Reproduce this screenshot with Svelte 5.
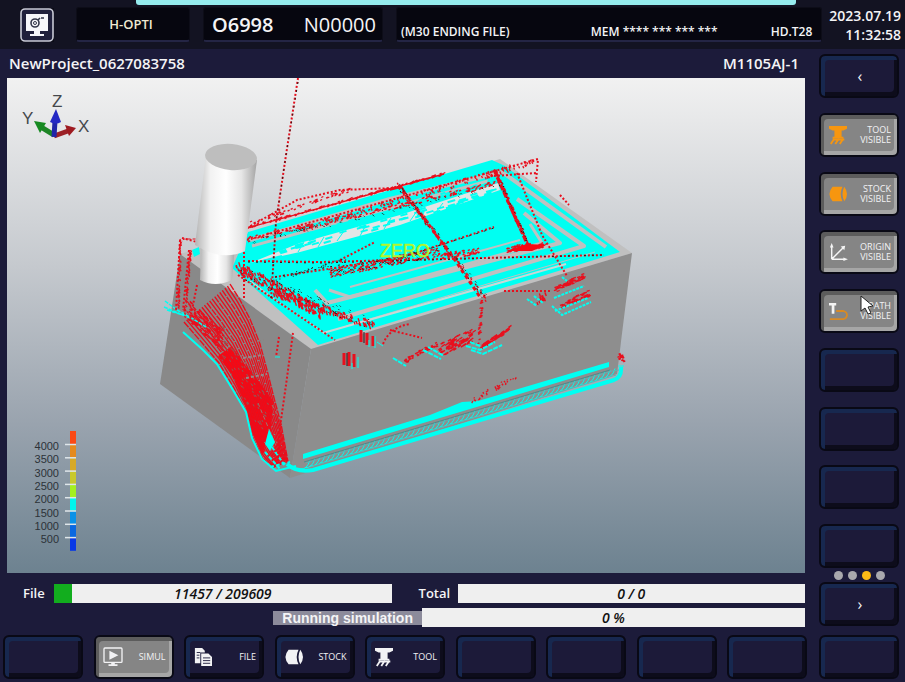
<script>
	// Soft keys down the right side
	const sideKeys = [
		{ label: '‹', kind: 'arrow', name: 'Previous' },
		{ label: 'TOOL VISIBLE', icon: 'tool', on: true },
		{ label: 'STOCK VISIBLE', icon: 'stock', on: true },
		{ label: 'ORIGIN VISIBLE', icon: 'origin', on: true },
		{ label: 'PATH VISIBLE', icon: 'path', on: true, pointer: true },
		{}, {}, {}, {}
	];

	// Soft keys along the bottom
	const bottomKeys = [
		{},
		{ label: 'SIMUL', icon: 'simul', on: true },
		{ label: 'FILE', icon: 'file' },
		{ label: 'STOCK', icon: 'stock' },
		{ label: 'TOOL', icon: 'tool' },
		{}, {}, {}, {}
	];

	const pages = [0, 1, 2, 3];
	const activePage = 2;

	const done = 11457;
	const lines = 209609;

	// Feed rate legend, top to bottom
	const feeds = [4000, 3500, 3000, 2500, 2000, 1500, 1000, 500];
	const feedColors = ['#fb4a16', '#e58a1e', '#d6a928', '#c8c92c', '#a4f020', '#00f6ee', '#0a92e8', '#0a68e0', '#0838e6'];

	// Small repeatable random generator so the path looks the same on each load
	let seed = 7;
	function rnd() {
		seed = (seed * 16807) % 2147483647;
		return seed / 2147483647;
	}

	// Short dashes spread round a line
	function scatter(x1, y1, x2, y2, spread, count, dx = 2, dy = -1) {
		let d = '';
		for (let i = 0; i < count; i++) {
			const t = rnd();
			const x = x1 + (x2 - x1) * t + (rnd() - 0.5) * 2;
			const y = y1 + (y2 - y1) * t + (rnd() - 0.5) * spread;
			d += `M${x.toFixed(1)} ${y.toFixed(1)}l${dx} ${dy}`;
		}
		return d;
	}

	// Curves between two border polylines with the same number of points
	function blend(a, b, t) {
		return 'M' + a.map((p, i) => `${(p[0] + (b[i][0] - p[0]) * t).toFixed(1)} ${(p[1] + (b[i][1] - p[1]) * t).toFixed(1)}`).join('L');
	}

	const fanLeft = [[184, 322], [203, 344], [219, 363], [234, 388], [246, 411], [253, 438], [262, 457], [273, 468]];
	const fanRight = [[230, 284], [240, 300], [250, 319], [260, 344], [268, 374], [274, 398], [281, 424], [288, 462]];
	const fan = Array.from({ length: 19 }, (_, i) => blend(fanLeft, fanRight, i / 18));

	// Small arcs between the two cyan rails at the foot of the block
	let teeth = '';
	for (let i = 0; i < 62; i++) {
		const x = 306 + i * 5;
		const y = 469 - i * 1.5;
		teeth += `M${x - 6} ${y}q7 1 10 -9`;
	}

	const redClouds = [
		scatter(247, 240, 500, 183, 5, 190),
		scatter(247, 228, 444, 174, 2, 150),
		scatter(300, 228, 535, 160, 6, 150, 1, 2),
		scatter(250, 223, 350, 190, 4, 55),
		scatter(236, 265, 322, 312, 12, 220, 1, 3),
		scatter(270, 290, 375, 325, 7, 130, 1, 3),
		scatter(328, 274, 440, 252, 9, 170),
		scatter(440, 257, 478, 252, 6, 60),
		scatter(505, 250, 545, 245, 6, 80),
		scatter(403, 362, 438, 343, 5, 50, 2, -1),
		scatter(439, 351, 472, 336, 13, 95, 3, -2),
		scatter(480, 348, 509, 329, 4, 60, 3, -2),
		scatter(553, 290, 582, 277, 6, 60, 3, -1),
		scatter(561, 306, 587, 294, 6, 60, 3, -1),
		scatter(537, 299, 545, 295, 8, 16, 1, 3),
		scatter(470, 402, 517, 377, 5, 45, 1, -1),
		scatter(398, 185, 485, 298, 6, 100, 1, 2),
		scatter(494, 168, 529, 247, 6, 130, 1, 2),
		scatter(481, 300, 478, 346, 3, 35, 2, -1),
		scatter(180, 240, 178, 308, 3, 40, 1, 2),
		scatter(190, 250, 184, 315, 4, 60, 1, 2),
		scatter(618, 356, 623, 360, 6, 20)
	];
	const darkClouds = [
		scatter(240, 272, 375, 325, 12, 95, 1, 1),
		scatter(330, 273, 440, 250, 10, 90, 1, 1),
		scatter(275, 279, 345, 260, 4, 40, 1, 0),
		scatter(247, 242, 500, 186, 4, 60, 1, 1),
		scatter(398, 185, 485, 298, 8, 55, 1, 1),
		scatter(495, 170, 529, 247, 5, 25, 1, 1)
	];
	const cyanNoise = [
		scatter(285, 243, 490, 182, 6, 90, 5, -2),
		scatter(275, 253, 490, 194, 8, 60, 7, -2)
	];
	const redTexture = scatter(186, 308, 222, 340, 20, 190, 2, 2);
	const fanGaps = scatter(222, 340, 268, 420, 44, 90, 1, 2);
</script>

{#snippet icon(name)}
	<svg class="icon" viewBox="0 0 20 20" aria-hidden="true">
		{#if name === 'tool'}
			<path d="M0 0h20v3l-4 2h-2v7h2v2H4v-2h2V5H4L0 3z" />
			<path d="M2 20l4-6M7 20l4-6M12 20l4-6M4 15h13" fill="none" stroke="currentColor" stroke-width="2" />
		{:else if name === 'stock'}
			<path d="M4 2h11q-4 8 0 16H4q-7-8 0-16z" />
			<path d="M17 2q6 8 0 16q-4-8 0-16z" />
		{:else if name === 'origin'}
			<path d="M3 18V4M3 18h14M3 18L16 5" fill="none" stroke="currentColor" stroke-width="1.6" />
			<path d="M3 0l2 5H1zM21 18l-5 2v-4zM18 3l-1 5-4-4z" />
		{:else if name === 'path'}
			<path class="pin" d="M0 1h8v3H6v9H3V4H0z" />
			<path class="track" d="M1 19h15q4-1 4-4.500t-4-4.500H8" fill="none" stroke-width="2" />
		{:else if name === 'simul'}
			<rect x="0" y="0" width="20" height="16" rx="1" fill="none" stroke="currentColor" stroke-width="1.500" />
			<path d="M6 3l10 5-10 5zM8 16h4v2h3v2H5v-2h3z" />
		{:else if name === 'file'}
			<path d="M1 0h8l3 3v2H7v12H1z" />
			<path d="M8 6h8l4 4v10H8z" />
			<path class="rule" d="M3 5h4M3 8h3M3 11h3M10 11h8M10 14h8M10 17h8" fill="none" />
		{/if}
	</svg>
{/snippet}

{#snippet softKey(key)}
	<button class="key" class:on={key.on} aria-label={key.name ?? key.label ?? 'Unassigned'}>
		{#if key.kind === 'arrow'}
			<span class="arrow">{key.label}</span>
		{:else if key.icon}
			{@render icon(key.icon)}
			<span class="key-label">{key.label}</span>
		{/if}
		{#if key.pointer}
			<svg class="pointer" viewBox="0 0 14 20" aria-hidden="true">
				<path d="M1 1v15l4-3 3 6 3-1-3-6 5-1z" />
			</svg>
		{/if}
	</button>
{/snippet}

<div class="screen">
	<header>
		<div class="banner"></div>
		<button class="logo" aria-label="Monitor">
			<svg viewBox="0 0 34 34">
				<rect x="1" y="1" width="32" height="32" rx="4" fill="#20203c" stroke="#c9cad6" stroke-width="1.6" />
				<path d="M6 6h22v17H6zM14 23h6v3h4v2H10v-2h4z" fill="#f6f6fa" />
				<circle cx="15" cy="15" r="4" fill="none" stroke="#33364a" stroke-width="1.6" />
				<circle cx="15" cy="15" r="1.5" fill="none" stroke="#33364a" />
				<path d="M18 12l2-2M21 10h3" fill="none" stroke="#33364a" stroke-width="1.6" />
			</svg>
		</button>
		<div class="display mode">H-OPTI</div>
		<div class="display program">
			<span class="strong">O6998</span>
			<span>N00000</span>
		</div>
		<div class="display status">
			<span>(M30 ENDING FILE)</span>
			<span class="mem">MEM **** *** *** ***</span>
			<span>HD.T28</span>
		</div>
		<div class="clock">
			<time>2023.07.19</time>
			<time>11:32:58</time>
		</div>
	</header>

	<main>
		<section class="work">
			<div class="titles">
				<span>NewProject_0627083758</span>
				<span>M1105AJ-1</span>
			</div>

			<svg class="scene" viewBox="7 78 798 495" role="img" aria-label="Machining simulation">
				<defs>
					<linearGradient id="sky" x1="0" y1="0" x2="0" y2="1">
						<stop offset="0" stop-color="#f1f1f1" />
						<stop offset="0.38" stop-color="#c5c9ce" />
						<stop offset="0.7" stop-color="#99a3ae" />
						<stop offset="1" stop-color="#6d8290" />
					</linearGradient>
					<linearGradient id="steel" x1="0" y1="0" x2="1" y2="0">
						<stop offset="0" stop-color="#b4b4b4" />
						<stop offset="0.25" stop-color="#f2f2f2" />
						<stop offset="0.5" stop-color="#ffffff" />
						<stop offset="0.75" stop-color="#e6e6e6" />
						<stop offset="1" stop-color="#a4a4a4" />
					</linearGradient>
				</defs>
				<rect x="7" y="78" width="798" height="495" fill="url(#sky)" />

				<!-- stock -->
				<path d="M180 254L500 159L632 253L311 349z" fill="#c0c0c0" />
				<path d="M180 254L311 349L290 478L160 384z" fill="#898989" />
				<path d="M311 349L632 253L617 374L290 478z" fill="#8e8e8e" />

				<!-- pocket passes -->
				<g class="cyan">
					<path class="fill" d="M232 268L248 232L492 160L505 166L620 252L318 345z" />
				</g>
				<g fill="none" stroke="#c0c0c0" stroke-width="4" stroke-linejoin="round">
					<path d="M250 240L390 199L502 172L606 247" />
					<path d="M252 246L488 181" stroke-width="3" />
					<path d="M517 199L584 246L338 319" />
					<path d="M524 213L560 243L327 303L315 290" />
					<path d="M530 224L542 243L350 297L329 290" stroke-width="3" />
					<path d="M350 287L520 240" stroke-width="2" />
					<path d="M595 252L346 326" stroke-width="1" />
					<path d="M250 281L323 333L566 264" stroke="#c9d8d6" stroke-width="2" />
				</g>
				<path d="M250 263L300 243L400 215L498 183L500 190L400 225L300 252z" fill="#e2e6e6" />
				<g class="cyan">
					{#each cyanNoise as d}
						<path {d} stroke-width="2" />
					{/each}
					<path d="M250 264L282 256M245 275L325 336" stroke-width="2" />
					<path d="M298 252L304 242M318 247L324 237M337 241L344 231M360 236L366 225M384 229L391 218M410 221L417 211M436 212L443 203" stroke-width="1" />
				</g>

				<!-- foot of the block -->
				<g class="cyan">
					<path d={teeth} stroke-width="1" />
					<path d="M306 463L612 371L619 370M313 466L616 375" stroke="#5fb2b2" stroke-width="1" />
					<path d="M287 464Q297 473 313 470L614 380Q622 377 621 367" stroke-width="4" />
					<path class="fill" d="M303 454L430 415L462 402L478 401L609 362V367L470 409L303 459z" />
				</g>
				<path d="M304 462L610 370" stroke="#4d8a8c" />

				<!-- side fan -->
				<g class="red">
					<path class="fill" d="M218 356L232 346L246 366L255 376L273 401L271 430L262 455L252 432L245 404L231 374z" />
					{#each fan as d, i}
						<path {d} stroke-width="1.4" stroke-dasharray={i % 3 === 0 ? '7 1' : 'none'} />
					{/each}
					<path d={redTexture} stroke-width="1.2" />
					<path d="M250 343L264 340M258 403L276 446M272 405L281 421M264 442L286 464" stroke="#9a7770" stroke-dasharray="4 3" />
				</g>
				<path d={fanGaps} stroke="#8f5a58" />
				<path d="M243 358L263 355M246 378L267 374" stroke="#958a8a" stroke-width="2" stroke-dasharray="3 2" />
				<g class="cyan">
					<path d="M183 332L203 350L217 364L233 390L246 412L252 438L262 459L276 471L296 466" stroke-width="2" />
					<path d="M165 301L177 310L190 317L206 327M164 307L190 318M167 310L186 316" stroke-width="1.5" stroke-dasharray="4 1" />
					<path class="fill" d="M269 429L275 442L270 451L265 444z" />
					<path d="M265 452L280 469M272 447L285 466M270 467L290 462" stroke-width="2" stroke-dasharray="4 2" />
				</g>

				<!-- approach moves -->
				<g class="red">
					<path class="dots" d="M298 78L286 155L276 222L271 300" />
					<path class="dots" d="M293 333L286 385L280 427L278 461M279 337L276 357M244 228V300" />
					<path class="dots" d="M182 238L197 242M180 240L176 310M189 250L183 310M197 285L190 320" />
					<path class="dots" d="M247 228L297 200L340 190L395 188M247 240L538 159L536 182M494 176L536 173" />
					<path class="dots" d="M517 173L542 235L567 276M504 291L552 291M560 195L569 205" />
					<path class="dots" d="M248 261L320 262L604 255M275 277L400 258L494 227M340 260L375 242" />
					<path class="dots" d="M238 275L335 340M383 344Q390 327 410 324M390 330L422 338" />
					<path d="M247 228L444 174M390 190L402 187L410 200" stroke-width="1.3" />
					{#each redClouds as d}
						<path {d} stroke-width="1.3" />
					{/each}
					<path class="fill" d="M506 251L527 244L546 245L532 251z" />
					<path d="M344 353V365M349 352V366M354 354V367M361 330V342M367 333V345M373 336V346" stroke-width="3" />
					<path d="M398 186L412 202L455 260L480 297" stroke-width="3" stroke-dasharray="4 3" />
					<path d="M494 170L510 206L528 246" stroke-width="3" stroke-dasharray="6 2" />
					<path d="M180 254V244L184 239H197" stroke-dasharray="3 2" />
				</g>
				<g fill="none" stroke="#2b1a1a">
					{#each darkClouds as d}
						<path {d} />
					{/each}
					<path d="M248 262L320 263L604 255M400 258L494 228M275 277L345 264M298 82L286 155L276 222L271 300" stroke-dasharray="2 6" />
					<path d="M347 353V366M364 332V343" />
				</g>
				<g class="cyan">
					<path d="M358 357V368M352 363V369M375 336V348M369 340V347" />
					<path d="M393 358L406 366M423 350L441 359M428 347L444 356M471 350L483 354L502 345M466 346L480 350L495 342M470 342L480 346" stroke-width="2" stroke-dasharray="5 1" />
					<path d="M527 299L537 306M534 296L543 303M554 298L584 286M552 306L562 315L591 302M555 311L588 298M562 277L567 281" stroke-width="2" stroke-dasharray="3 1" />
					<path d="M618 366H624M377 342L383 346M275 357H280" />
				</g>
				<text class="zero" x="380" y="257">ZERO</text>

				<!-- cutter -->
				<path d="M192 250L199 247L200 254L194 257z" fill="#00fff2" />
				<path d="M201 246H235L232 280Q215 288 200 280z" fill="url(#steel)" />
				<path d="M206 156L257 160L245 251Q222 262 195 245z" fill="url(#steel)" />
				<ellipse cx="231" cy="157" rx="26" ry="13" transform="rotate(5 231 157)" fill="#bebebe" />

				<!-- axis triad -->
				<g stroke-width="5">
					<path d="M54 135L41 127" stroke="#1d8526" />
					<path d="M54 136L68 131" stroke="#9c2127" />
					<path d="M54 137L55 121" stroke="#2025a8" />
				</g>
				<path d="M34 121L46 123L40 133z" fill="#178a22" />
				<path d="M76 128L65 125L69 136z" fill="#9e1a20" />
				<path d="M56 109L50 122Q56 125 61 122z" fill="#2428c4" />
				<g class="axis">
					<text x="52" y="107">Z</text>
					<text x="22" y="124">Y</text>
					<text x="78" y="132">X</text>
				</g>

				<!-- feed legend -->
				{#each feedColors as color, i}
					<rect x="70" y={431 + i * 13.3} width="6" height="13.4" fill={color} />
				{/each}
				{#each feeds as feed, i}
					<path d="M65 {444.5 + i * 13.3}H76" stroke="#dfe6ea" stroke-width="1.5" />
					<text class="feed" x="59" y={450 + i * 13.3}>{feed}</text>
				{/each}
			</svg>

			<div class="progress">
				<div class="row">
					<span class="caption" id="file-caption">File</span>
					<div class="bar file" role="progressbar" aria-labelledby="file-caption" aria-valuenow={done} aria-valuemax={lines}>
						<div class="done" style:width="{(done / lines) * 100}%"></div>
						<span>{done} / {lines}</span>
					</div>
					<span class="caption total" id="total-caption">Total</span>
					<div class="bar" role="progressbar" aria-labelledby="total-caption" aria-valuenow="0">
						<span>0 / 0</span>
					</div>
				</div>
				<div class="row running">
					<span class="state" id="state-caption">Running simulation</span>
					<div class="bar" role="progressbar" aria-labelledby="state-caption" aria-valuenow="0">
						<span>0 %</span>
					</div>
				</div>
			</div>
		</section>

		<aside>
			<div class="side-keys">
				{#each sideKeys as key}
					{@render softKey(key)}
				{/each}
			</div>
			<div class="pages">
				{#each pages as page}
					<i class:active={page === activePage}></i>
				{/each}
			</div>
			{@render softKey({ label: '›', kind: 'arrow', name: 'Next' })}
		</aside>
	</main>

	<nav>
		<div class="bottom-keys">
			{#each bottomKeys as key}
				{@render softKey(key)}
			{/each}
		</div>
		{@render softKey({})}
	</nav>
</div>

<style>
	:global(body) {
		margin: 0;
		background: #1c1b3a;
	}

	.screen {
		min-height: 100vh;
		box-sizing: border-box;
		background: #1c1b3a;
		color: #f4f4f6;
		font-family: 'Open Sans', 'Noto Sans', sans-serif;
		overflow: hidden;
	}

	header {
		position: relative;
		display: flex;
		align-items: center;
		height: 49px;
		box-sizing: border-box;
		padding: 0 4px 0 20px;
		background: #131322;
	}

	.banner {
		position: absolute;
		top: 0;
		left: 15%;
		right: 12%;
		height: 5px;
		background: #96ecee;
		border-radius: 0 0 3px 3px;
	}

	.logo {
		width: 34px;
		height: 34px;
		padding: 0;
		border: 0;
		background: #0b0b16;
		margin-right: 22px;
	}

	.logo svg {
		display: block;
	}

	.display {
		display: flex;
		align-items: center;
		height: 35px;
		box-sizing: border-box;
		background: #06060f;
		border: 1px solid #0d0d18;
		border-bottom: 2px solid #242544;
		border-radius: 3px;
		margin-right: 13px;
	}

	.mode {
		width: 114px;
		justify-content: center;
		padding-right: 4px;
		font-size: 13px;
		font-weight: 600;
		color: #efe9d2;
	}

	.program {
		width: 180px;
		justify-content: space-between;
		padding: 0 6px 0 8px;
		font-size: 20px;
	}

	.strong {
		font-weight: 600;
	}

	.status {
		flex: 1;
		align-items: flex-end;
		justify-content: space-between;
		padding: 0 9px 0 4px;
		margin-right: 7px;
		font-size: 12px;
		line-height: 16px;
		font-weight: 600;
	}

	.mem {
		margin-left: 28px;
	}

	.clock {
		display: flex;
		flex-direction: column;
		text-align: right;
		font-size: 14px;
		font-weight: 600;
		line-height: 19px;
	}

	main {
		display: flex;
		gap: 14px;
		padding-right: 6px;
	}

	.work {
		flex: 1;
		padding-left: 7px;
	}

	.titles {
		display: flex;
		justify-content: space-between;
		padding: 0 6px 0 2px;
		font-size: 15px;
		font-weight: 600;
		line-height: 29px;
	}

	.scene {
		display: block;
		width: 100%;
		height: auto;
	}

	.scene .cyan {
		fill: none;
		stroke: #00fff2;
	}

	.scene .cyan .fill {
		fill: #00fff2;
		stroke: none;
	}

	.scene .red {
		fill: none;
		stroke: #e80f1d;
	}

	.scene .red .fill {
		fill: #fa0812;
		stroke: none;
	}

	.scene .dots {
		stroke-width: 2;
		stroke-dasharray: 2 2;
	}

	.zero {
		font-family: 'Liberation Sans', sans-serif;
		font-size: 18px;
		fill: #b4f52a;
		stroke: #b4f52a;
		stroke-width: 0.5;
	}

	.axis {
		font-family: 'Liberation Sans', sans-serif;
		font-size: 17px;
		fill: #45484c;
	}

	.feed {
		font-family: 'Liberation Sans', sans-serif;
		font-size: 11px;
		fill: #2c3238;
		text-anchor: end;
	}

	.progress {
		display: flex;
		flex-direction: column;
		gap: 5px;
		padding-top: 11px;
	}

	.row {
		display: flex;
		align-items: center;
		height: 19px;
	}

	.caption {
		width: 47px;
		box-sizing: border-box;
		padding-left: 16px;
		font-size: 13px;
		font-weight: 600;
		line-height: 19px;
	}

	.caption.total {
		width: 66px;
		padding-left: 27px;
	}

	.bar {
		position: relative;
		flex: 35;
		height: 19px;
		background: #efefef;
		color: #111;
		font-size: 14px;
		font-style: italic;
		font-weight: 600;
		line-height: 19px;
		text-align: center;
	}

	.bar.file {
		flex: 34;
	}

	.bar span {
		position: relative;
	}

	.done {
		position: absolute;
		inset: 0 auto 0 0;
		background: #12ad1e;
	}

	.running {
		justify-content: flex-end;
	}

	.running .bar {
		flex: 0 0 48%;
	}

	.state {
		padding: 0 9px;
		background: #8c8b9b;
		font-family: 'Liberation Sans', sans-serif;
		font-size: 14px;
		font-weight: bold;
		line-height: 14px;
	}

	aside {
		display: flex;
		flex-direction: column;
		width: 80px;
		padding: 5px 0 1px;
	}

	.side-keys {
		flex: 1;
		display: flex;
		flex-direction: column;
		justify-content: space-between;
	}

	.key {
		position: relative;
		display: flex;
		align-items: center;
		justify-content: space-between;
		width: 80px;
		height: 44px;
		box-sizing: border-box;
		padding: 0 6px 0 8px;
		border: 2px solid #090915;
		border-radius: 6px;
		background: #1c1a39;
		box-shadow: inset 4px 4px 0 #17284f, inset -3px -4px 0 #0d0c1b;
		color: #f2f2f4;
		font-family: inherit;
		font-size: 9px;
		font-weight: 500;
		line-height: 10px;
		text-align: right;
	}

	.key.on {
		background: #858585;
		box-shadow: inset 3px 4px 0 #5c5c5c, inset -3px -4px 0 #a6a6a6;
	}

	.icon {
		width: 18px;
		height: 18px;
		fill: currentColor;
		overflow: visible;
	}

	.side-keys .icon {
		color: #f7960f;
	}

	.side-keys .key:nth-child(4) .icon {
		color: #f4f4f4;
	}

	.pin {
		fill: #f4f4f4;
	}

	.track {
		stroke: #d98a24;
	}

	.rule {
		stroke: #1c1a39;
	}

	.key-label {
		max-width: 40px;
	}

	.arrow {
		flex: 1;
		font-size: 16px;
		line-height: 16px;
		text-align: center;
	}

	.pointer {
		position: absolute;
		left: 39px;
		top: 4px;
		width: 14px;
		height: 20px;
		fill: #fff;
		stroke: #222;
	}

	.pages {
		display: flex;
		align-items: center;
		justify-content: center;
		gap: 5px;
		height: 14px;
	}

	.pages i {
		width: 9px;
		height: 9px;
		border-radius: 50%;
		background: #a9a9ad;
	}

	.pages i.active {
		background: #fdbb16;
	}

	nav {
		display: flex;
		gap: 12px;
		padding: 8px 6px 2px 3px;
	}

	.bottom-keys {
		flex: 1;
		display: flex;
		justify-content: space-between;
	}
</style>
